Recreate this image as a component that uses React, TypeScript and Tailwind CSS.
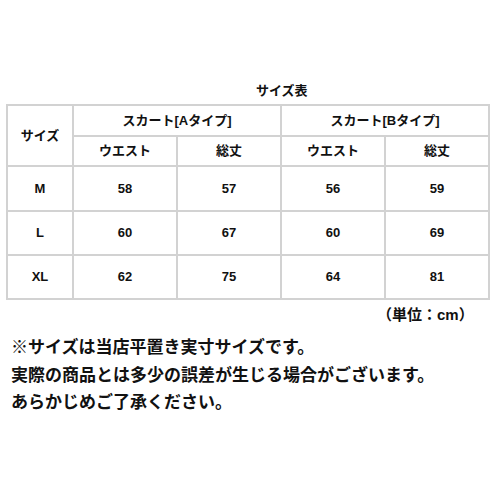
import React from "react";

const font = { fontFamily: '"Liberation Sans", "Noto Sans CJK JP", sans-serif' };

function Cell({ children, className = "" }: { children: React.ReactNode; className?: string }) {
  return (
    <div className={"bg-white flex items-center justify-center text-[13px] font-bold text-[#111] " + className}>
      {children}
    </div>
  );
}

export default function App() {
  const rows = [
    ["M", "58", "57", "56", "59"],
    ["L", "60", "67", "60", "69"],
    ["XL", "62", "75", "64", "81"],
  ];
  return (
    <div className="w-[500px] h-[500px] bg-white text-[#111] overflow-hidden" style={font}>
      <div className="mt-[82px] h-[18px] leading-[18px] pl-[256px] text-[13px] font-bold">サイズ表</div>
      <div className="mt-[4px] ml-[6px] w-[484px] p-[2px] bg-[#d2d2d2] grid gap-[2px] grid-cols-[64px_102px_102px_102px_102px] grid-rows-[29px_28px_43px_42px_42px]">
        <Cell className="row-span-2">サイズ</Cell>
        <Cell className="col-span-2">スカート[Aタイプ]</Cell>
        <Cell className="col-span-2">スカート[Bタイプ]</Cell>
        <Cell>ウエスト</Cell>
        <Cell>総丈</Cell>
        <Cell>ウエスト</Cell>
        <Cell>総丈</Cell>
        {rows.map((r) =>
          r.map((v, i) => <Cell key={r[0] + i}>{v}</Cell>)
        )}
      </div>
      <div className="mt-[6px] h-[18px] leading-[18px] pl-[377px] text-[15px] font-bold">（単位：cm）</div>
      <div className="mt-[10px] pl-[11px] text-[17px] leading-[27.5px] font-bold">
        <div>※サイズは当店平置き実寸サイズです。</div>
        <div>実際の商品とは多少の誤差が生じる場合がございます。</div>
        <div>あらかじめご了承ください。</div>
      </div>
    </div>
  );
}
